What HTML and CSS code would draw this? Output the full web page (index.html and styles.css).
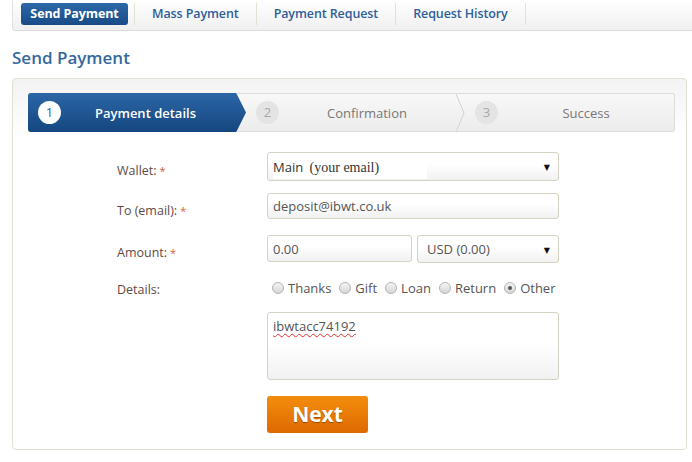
FILE: index.html
```html
<!DOCTYPE html>
<html>
<head>
<meta charset="utf-8">
<link rel="stylesheet" href="styles.css">
</head>
<body>
<div class="tabs">
  <div class="tab first"><span class="pill">Send Payment</span></div>
  <div class="tab">Mass Payment</div>
  <div class="tab">Payment Request</div>
  <div class="tab">Request History</div>
</div>
<h1 class="title">Send Payment</h1>
<div class="card">
  <div class="stepper">
    <div class="step active"><span class="num">1</span><span class="label">Payment details</span></div>
    <svg class="arrow" width="10" height="38" viewBox="0 0 10 38"><defs><linearGradient id="bg" x1="0" y1="0" x2="0" y2="1"><stop offset="0" stop-color="#2c66a6"/><stop offset="1" stop-color="#13467f"/></linearGradient></defs><polygon points="0,0 0.5,0 10,19 0.5,38 0,38" fill="url(#bg)"/></svg>
    <div class="step"><span class="num">2</span><span class="label">Confirmation</span></div>
    <svg class="chev" width="10" height="38" viewBox="0 0 10 38"><polyline points="1,0 9,19 1,38" fill="none" stroke="#d2d2d2" stroke-width="1"/></svg>
    <div class="step"><span class="num">3</span><span class="label">Success</span></div>
  </div>
  <div class="form">
    <div class="row r-wallet">
      <div class="lbl">Wallet:<span class="req">*</span></div>
      <div class="field select wallet"><span class="wtext">Main <span class="serif">(your email)</span></span><span class="caret">▼</span></div>
    </div>
    <div class="row r-to">
      <div class="lbl">To (email):<span class="req">*</span></div>
      <div class="field input">deposit@ibwt.co.uk</div>
    </div>
    <div class="row r-amount">
      <div class="lbl">Amount:<span class="req">*</span></div>
      <div class="pair">
        <div class="field input amount">0.00</div>
        <div class="field select currency"><span>USD (0.00)</span><span class="caret">▼</span></div>
      </div>
    </div>
    <div class="row r-details">
      <div class="lbl">Details:</div>
      <div class="radios">
        <span class="opt"><span class="radio"></span>Thanks</span>
        <span class="opt"><span class="radio"></span>Gift</span>
        <span class="opt"><span class="radio"></span>Loan</span>
        <span class="opt"><span class="radio"></span>Return</span>
        <span class="opt"><span class="radio on"></span>Other</span>
      </div>
    </div>
    <div class="row r-text">
      <div class="lbl"></div>
      <div class="field textarea"><span class="spell">ibwtacc74192</span></div>
    </div>
    <div class="row r-btn">
      <div class="lbl"></div>
      <div class="btn">Next</div>
    </div>
  </div>
</div>
</body>
</html>
```

FILE: styles.css
```css
body {
  margin: 0;
  background: #fff;
  font-family: "Open Sans", "DejaVu Sans", sans-serif;
  color: #555;
}
.tabs {
  margin-left: 12px;
  height: 31px;
  box-sizing: border-box;
  padding: 3px 0 0 8px;
  display: flex;
  align-items: flex-start;
  border-left: 1px solid #e2e2e2;
  border-bottom: 1px solid #dcdcdc;
  border-bottom-left-radius: 4px;
  background: linear-gradient(#ffffff, #f0f0f0);
}
.tab {
  height: 22px;
  line-height: 22px;
  padding: 0 17px 0 17px;
  border-right: 1px solid #e3e1d1;
  font-size: 12.5px;
  font-weight: 600;
  color: #2f5f9c;
  letter-spacing: -0.1px;
}
.tab.first {
  padding: 0 6px 0 0;
}
.pill {
  display: block;
  height: 22px;
  width: 107px;
  text-align: center;
  border-radius: 3px;
  color: #fff;
  font-weight: 700;
  background: linear-gradient(#2d68a8, #184b87);
}
.title {
  margin: 16px 0 0 12px;
  height: 31px;
  font-size: 17px;
  font-weight: 600;
  color: #35689e;
  line-height: 22px;
}
.card {
  margin: 0 5px 0 12px;
  height: 372px;
  box-sizing: border-box;
  border: 1px solid #e2e0d2;
  border-radius: 4px;
  padding: 14px 11px 0 15px;
  background: linear-gradient(#f3f3f3, #ffffff 60px);
}
.stepper {
  display: flex;
  height: 39px;
  box-sizing: border-box;
  border: 1px solid #dcdcdc;
  border-left: none;
  border-radius: 3px;
  background: linear-gradient(#f8f8f8, #ececec);
}
.step {
  flex: 1;
  display: flex;
  align-items: center;
  padding-left: 10px;
  font-size: 13px;
  color: #777;
}
.step.active {
  flex: none;
  width: 208px;
  box-sizing: border-box;
  margin-top: -1px;
  margin-bottom: -1px;
  border-radius: 3px 0 0 3px;
  background: linear-gradient(#2c66a6, #13467f);
  color: #fff;
}
.arrow, .chev {
  flex: none;
  display: block;
}
.arrow { margin-top: -1px; height: 39px; }
.num {
  width: 23px;
  height: 23px;
  border-radius: 50%;
  background: #e4e4e4;
  color: #a8a8a8;
  font-size: 13px;
  line-height: 23px;
  text-align: center;
  flex: none;
}
.active .num {
  background: #fff;
  color: #2a62a2;
}
.label {
  flex: 1;
  text-align: center;
}
.active .label {
  font-weight: 600;
  padding-right: 6px;
}
.form {
  margin-left: 89px;
  padding-top: 20px;
}
.row {
  display: flex;
}
.lbl {
  width: 150px;
  flex: none;
  font-size: 12.5px;
  color: #5e4b44;
}
.req {
  color: #e06040;
  margin-left: 3px;
  font-size: 11px;
}
.field {
  box-sizing: border-box;
  border: 1px solid #d6d3c2;
  border-radius: 3px;
  background: linear-gradient(#ffffff 40%, #f1f1f1);
  font-size: 13px;
  color: #555;
  display: flex;
  align-items: center;
  padding-left: 5px;
}
.r-wallet .lbl { padding-top: 10px; }
.wallet {
  width: 292px;
  height: 29px;
  justify-content: space-between;
  padding-right: 8px;
}
.wtext {
  background: #fff;
  padding-right: 48px;
  height: 24px;
  line-height: 24px;
  color: #333;
}
.serif {
  font-family: "Liberation Serif", serif;
  font-size: 14px;
  margin-left: 3px;
  color: #333;
}
.caret {
  font-size: 8px;
  color: #111;
}
.r-to { margin-top: 12px; }
.r-to .lbl { padding-top: 9px; }
.r-to .input {
  width: 292px;
  height: 26px;
}
.r-amount { margin-top: 16px; }
.r-amount .lbl { padding-top: 9px; }
.pair {
  display: flex;
  gap: 5px;
}
.amount {
  width: 145px;
  height: 27px;
}
.currency {
  width: 142px;
  height: 28px;
  justify-content: space-between;
  padding-left: 9px;
  padding-right: 8px;
}
.r-details { margin-top: 14px; }
.r-details .lbl { padding-top: 4px; }
.radios {
  display: flex;
  padding-left: 5px;
  font-size: 13px;
  color: #555;
}
.opt {
  display: flex;
  align-items: center;
  margin-right: 8px;
}
.radio {
  width: 12px;
  height: 12px;
  border-radius: 50%;
  border: 1px solid #b4b4b4;
  background: linear-gradient(#f4f4f4, #d6d6d6);
  margin-right: 4px;
  box-sizing: border-box;
  position: relative;
}
.radio.on::after {
  content: "";
  position: absolute;
  left: 3px;
  top: 3px;
  width: 4px;
  height: 4px;
  border-radius: 50%;
  background: #555;
}
.r-text { margin-top: 14px; }
.textarea {
  width: 292px;
  height: 68px;
  align-items: flex-start;
  padding-top: 4px;
  background: linear-gradient(#ffffff 45%, #f1f1f1);
}
.spell {
  text-decoration: underline wavy #e03030;
  text-decoration-thickness: 1px;
  text-underline-offset: 2px;
}
.r-btn { margin-top: 16px; }
.btn {
  width: 101px;
  height: 37px;
  border-radius: 3px;
  background: linear-gradient(#f38d0d, #df6900);
  color: #fff;
  font-size: 21px;
  font-weight: 700;
  text-align: center;
  line-height: 37px;
  text-shadow: 0 1px 1px rgba(0,0,0,0.35);
}
```
